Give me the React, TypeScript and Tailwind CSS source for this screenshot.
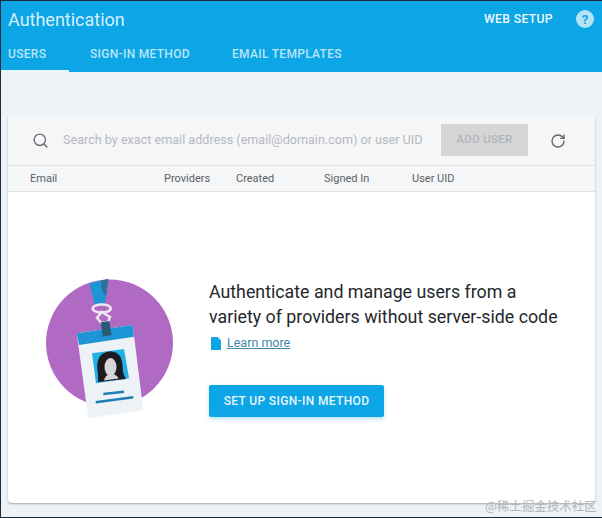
import { RotateCw, Search } from 'lucide-react';

const tabs = ['USERS', 'SIGN-IN METHOD', 'EMAIL TEMPLATES'];

function Badge() {
    return (
        <svg width="130" height="142" viewBox="0 0 130 142" className="shrink-0 overflow-visible">
            <circle cx="63.5" cy="64" r="63.5" fill="#b06ac4" />
            <path d="M43.3 4.3 L62.3 0 L59 24.3 L49 26.7 Z" fill="#1e96d6" />
            <path d="M55 1.6 L62.3 0 L60 17 L56 12 Z" fill="#2f6f98" />
            <ellipse cx="55.7" cy="29.5" rx="9" ry="4" fill="none" stroke="#ece7ef" strokeWidth="2.5" />
            <path d="M55.5 33 L51 39 L55.5 44 L62 43 L64 38 Z" fill="none" stroke="#ece7ef" strokeWidth="2.5" />
            <path d="M30.7 54.3 L86.7 46 L97.3 131 L42.3 139.3 Z" fill="#edf2f6" />
            <path d="M30.7 54.3 L86.7 46 L88 57.7 L33 66 Z" fill="#1e96d6" />
            <path d="M54.7 43.3 L63.3 42 L65.7 56 L56.7 57.7 Z" fill="#2b5a78" />
            <path d="M46 74.3 L78 70 L83 99.3 L50 104.3 Z" fill="#22b0e6" />
            <path d="M52 103 C53 92 49 88 53 79 C57 71 71 70 75 79 C78 88 75 92 80 100 Z" fill="#1e1a22" />
            <ellipse cx="64.5" cy="88" rx="6" ry="9" fill="#d8d6d9" />
            <path d="M58 101.5 C59 97 62 95 65 95 C68 95 71 96 72.5 99.5 Z" fill="#d8d6d9" />
            <path d="M57.3 115 L78 112.7" stroke="#1e7fb5" strokeWidth="2.5" />
            <path d="M49.7 123.3 L87.3 118.3" stroke="#1e7fb5" strokeWidth="2.5" />
        </svg>
    );
}

export default function App() {
    return (
        <div className="flex h-[518px] w-[602px] flex-col overflow-hidden border-y border-l border-[#1c2b3a] bg-[#eef1f5] font-['Roboto',sans-serif]">
            <header className="flex h-[71px] flex-col bg-[#0ca5e6] text-white">
                <div className="flex h-[37px] items-center justify-between pr-2 pl-[7px]">
                    <h1 className="text-[18px] leading-none text-[#d4effb]">Authentication</h1>
                    <div className="flex items-center gap-[23px]">
                        <span className="text-[12.2px] font-medium tracking-[0.35px] text-[#eefaff]">WEB SETUP</span>
                        <span className="flex size-[18px] items-center justify-center rounded-full bg-[#b5e4f8] text-[13px] font-bold text-[#0ca5e6]">
                            ?
                        </span>
                    </div>
                </div>
                <nav className="flex h-[34px] text-[12px] font-medium tracking-[0.3px] text-[#b9e6f9]">
                    <div className="flex w-[68px] items-center border-b-2 border-[#e8f7fd] pl-[7px]">{tabs[0]}</div>
                    <div className="flex w-[143px] items-center border-b-2 border-transparent pl-[21px]">{tabs[1]}</div>
                    <div className="flex items-center border-b-2 border-transparent pl-[20px]">{tabs[2]}</div>
                </nav>
            </header>

            <main className="flex flex-1 pt-[43px] pr-[7px] pb-[14px] pl-[7px]">
                <section className="flex flex-1 flex-col overflow-hidden rounded-sm bg-white shadow-[0_1px_2px_rgba(0,0,0,0.3)]">
                    <div className="flex h-[50px] items-center bg-[#f5f6f8] pr-[28px] pl-[24px]">
                        <Search className="size-[17px] text-[#6b6f73]" strokeWidth={2} />
                        <span className="ml-[14px] w-[378px] text-[12.6px] text-[#b6b9be]">
                            Search by exact email address (email@domain.com) or user UID
                        </span>
                        <div className="flex h-[32px] w-[87px] items-center justify-center rounded-[1px] bg-[#d4d5d7] text-[11.5px] font-medium tracking-[0.3px] text-[#b3b5b8]">
                            ADD USER
                        </div>
                        <RotateCw className="mt-px ml-[22px] size-[16px] text-[#5f6368]" strokeWidth={2} />
                    </div>
                    <div className="flex h-[27px] items-center border-y border-[#e0e2e5] bg-[#f5f6f8] pt-px pl-[22px] text-[11px] text-[#5b5f64]">
                        <span className="w-[134px]">Email</span>
                        <span className="w-[72px]">Providers</span>
                        <span className="w-[88px]">Created</span>
                        <span className="w-[88px]">Signed In</span>
                        <span>User UID</span>
                    </div>
                    <div className="flex flex-1 gap-[33px] pt-[87px] pl-[38px]">
                        <Badge />
                        <div>
                            <p className="text-[17.8px] leading-[25px] whitespace-nowrap text-[#24282c]">
                                Authenticate and manage users from a
                                <br />
                                variety of providers without server-side code
                            </p>
                            <a className="mt-[5px] flex items-center gap-[6px] pl-[2px] text-[12.5px] text-[#3f88ad] underline">
                                <svg width="10" height="13" viewBox="0 0 10 13" className="shrink-0">
                                    <path d="M1 0 H6.5 L10 3.5 V12 a1 1 0 0 1 -1 1 H1 a1 1 0 0 1 -1 -1 V1 a1 1 0 0 1 1 -1 Z" fill="#0ca5e6" />
                                </svg>
                                Learn more
                            </a>
                            <button className="mt-[32px] flex h-[32px] w-[175px] items-center justify-center rounded-[2px] bg-[#0ca5e6] text-[12px] font-medium tracking-[0.35px] text-[#e6f7fd] shadow-[0_2px_4px_rgba(12,165,230,0.3)]">
                                SET UP SIGN-IN METHOD
                            </button>
                        </div>
                    </div>
                </section>
            </main>
            <span className="absolute top-[497px] left-[485px] font-['Noto_Sans_CJK_SC',sans-serif] text-[12.5px] text-[#b3b6ba]">
                @稀土掘金技术社区
            </span>
        </div>
    );
}
